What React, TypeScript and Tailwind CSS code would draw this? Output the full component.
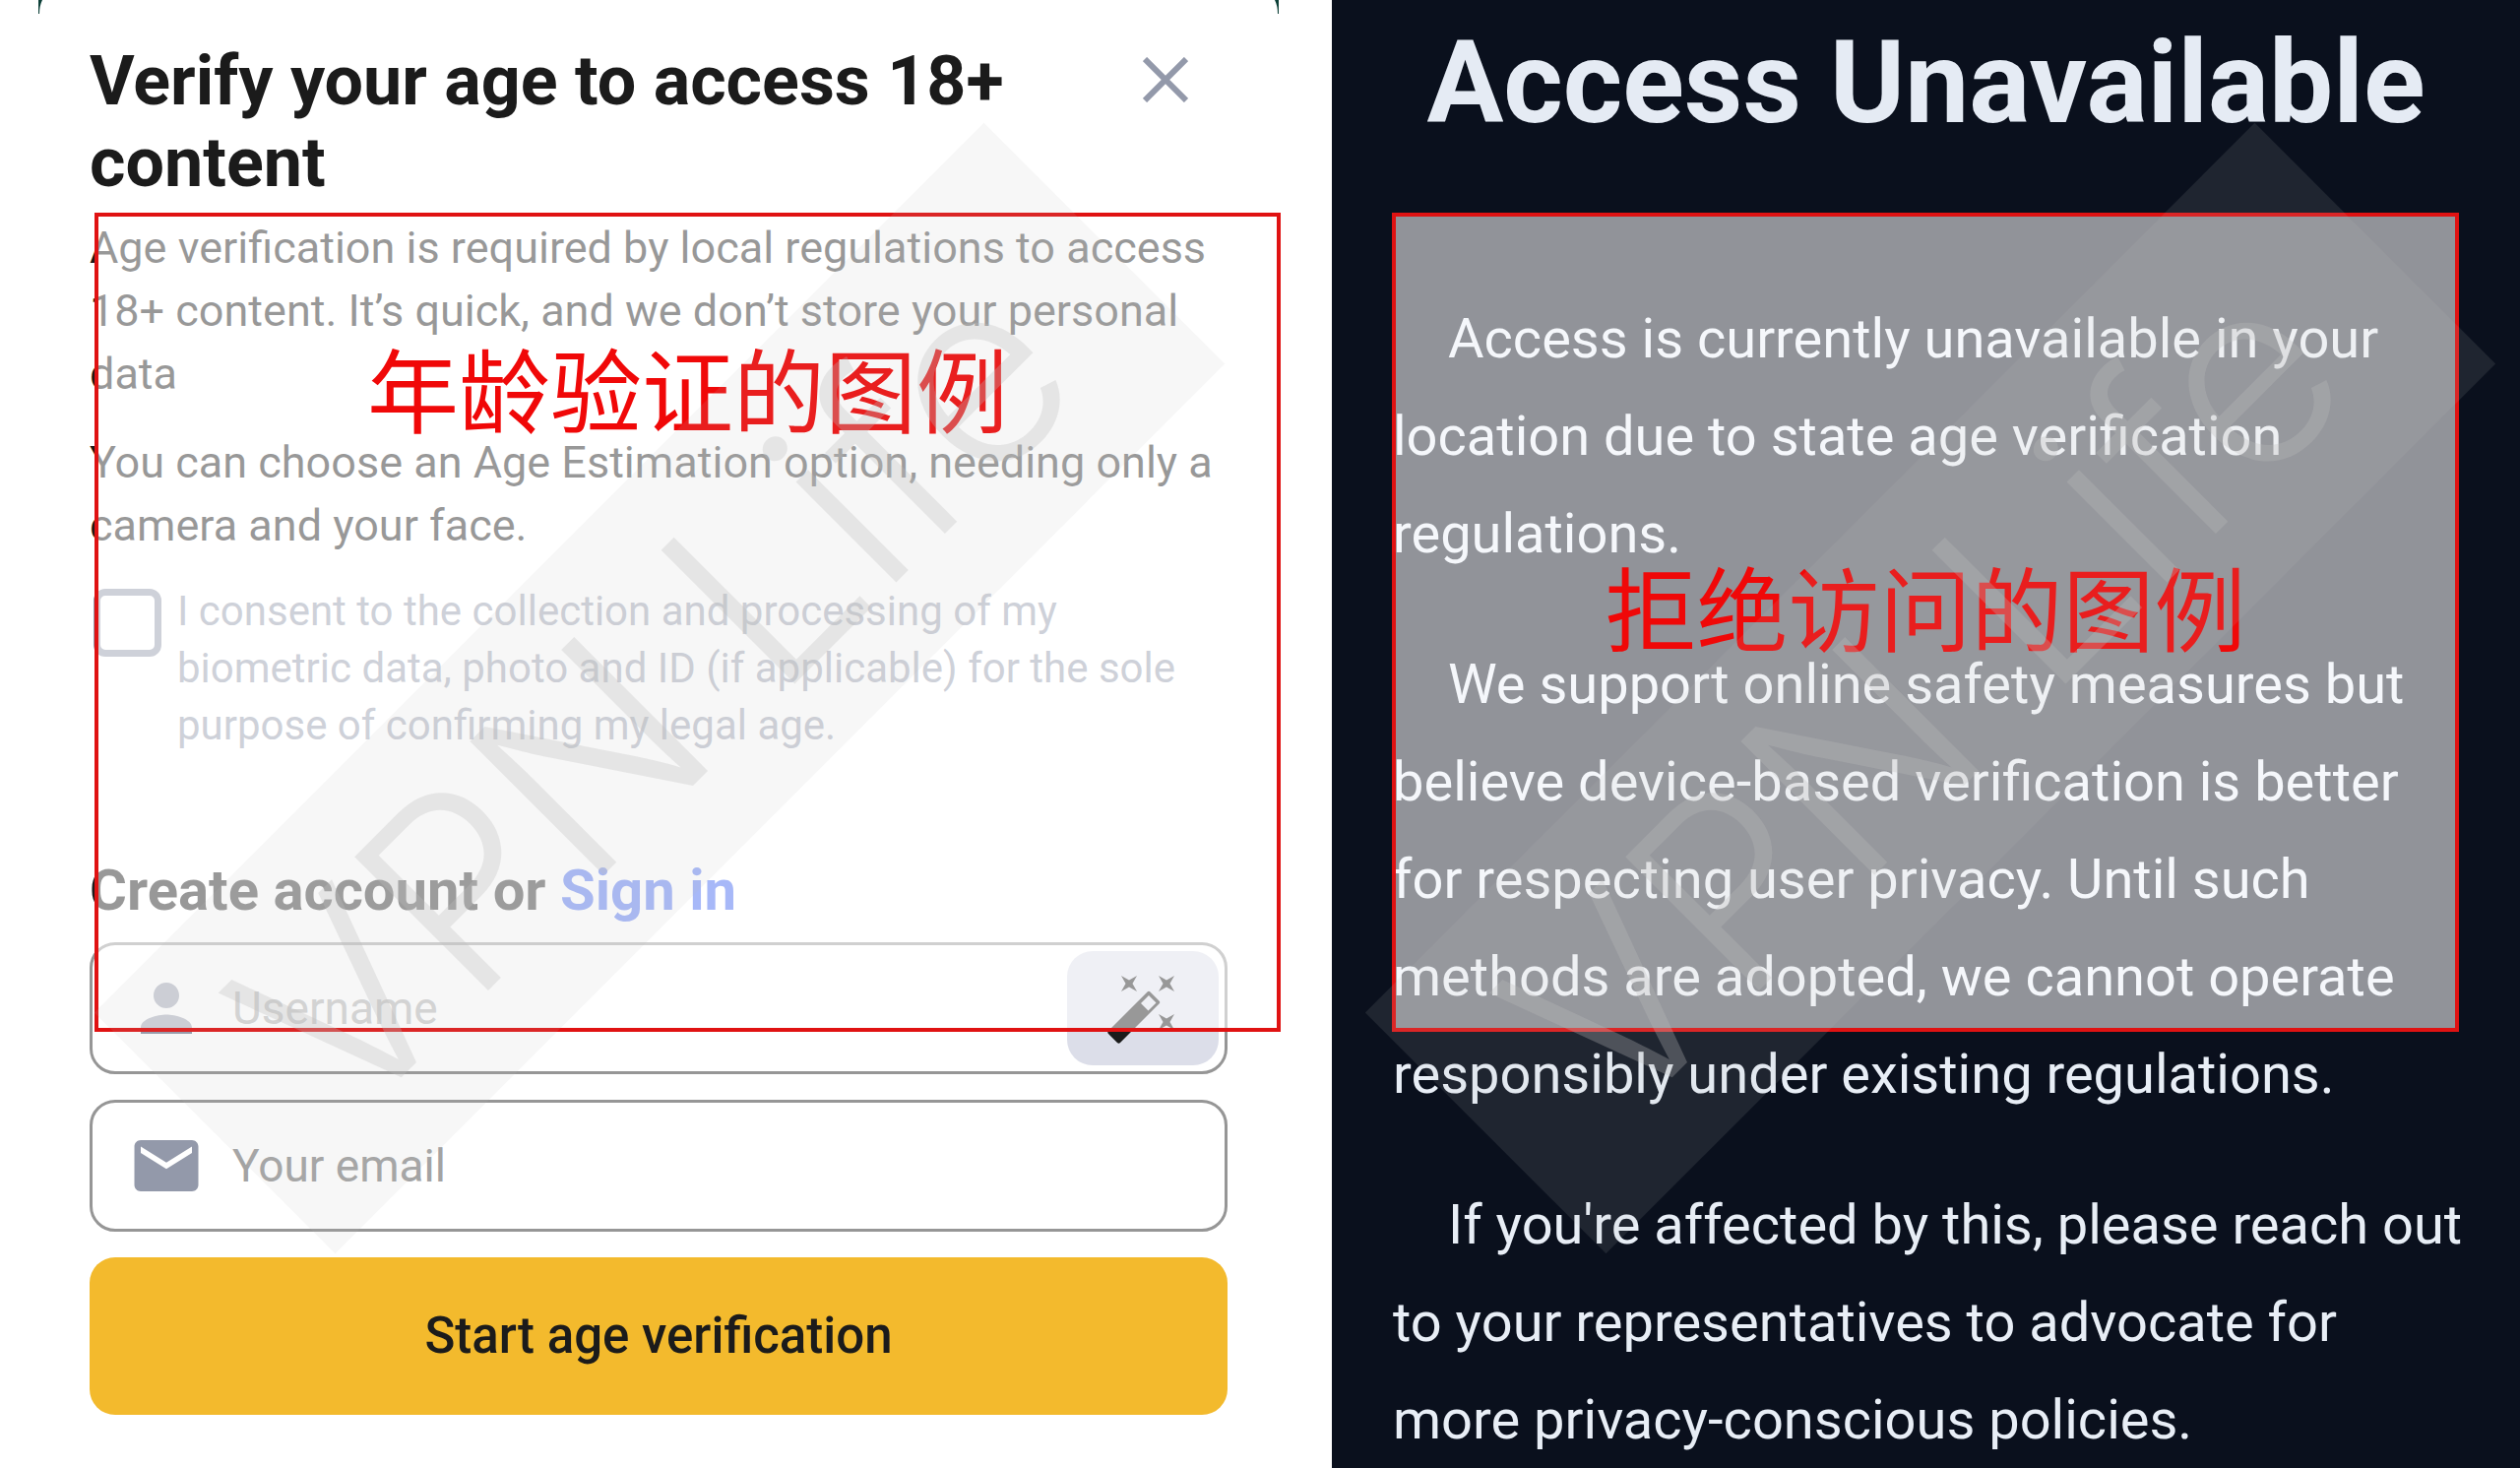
import React from "react";
import { MdPerson, MdMail } from "react-icons/md";

function Watermark({ inset }: { inset: string }) {
  return (
    <div className={`pointer-events-none absolute inset-0 z-20 flex items-start justify-center overflow-hidden ${inset}`} aria-hidden="true">
      <div className="mt-[526px] flex h-[346px] w-[1278px] shrink-0 -rotate-45 items-center justify-center bg-[#bbbbbb]/12 pr-5 pb-1">
        <span className="font-['Inter',sans-serif] text-[264px] leading-none font-light whitespace-nowrap text-[#bebebe]/30">
          VPN Life
        </span>
      </div>
    </div>
  );
}

function Callout({ text, frame, caption }: { text: string; frame: string; caption: string }) {
  return (
    <div className={`pointer-events-none absolute z-10 flex h-[832px] justify-center border-4 border-[#e01212] bg-white/55 ${frame}`}>
      <p className={`font-['Noto_Sans_CJK_SC',sans-serif] text-[93px] leading-[94px] whitespace-nowrap text-[#f00808] ${caption}`} lang="zh-CN">
        {text}
      </p>
    </div>
  );
}

function WandIcon() {
  return (
    <svg viewBox="0 0 76 76" className="size-[76px]" fill="#1b1b1b" aria-hidden="true">
      <path d="M16 5l8 4.500 8-4.500-4.500 8 4.500 8-8-4.500-8 4.500 4.500-8z" />
      <path d="M54 5l8 4.500 8-4.500-4.500 8 4.500 8-8-4.500-8 4.500 4.500-8z" />
      <path d="M54 44l8 4.500 8-4.500-4.500 8 4.500 8-8-4.500-8 4.500 4.500-8z" />
      <path fillRule="evenodd" d="M42.500 21.500q1.500-1.500 3 0l9 9q1.500 1.500 0 3L15 73q-1.500 1.500-3 0l-9-9q-1.500-1.500 0-3zM44 25l-8 8 7.500 7.500 8-8z" />
    </svg>
  );
}

function AgePanel() {
  return (
    <section className="relative bg-white pt-[41px] pr-[106px] pl-[91px] text-[#1b1b1b]">
      <svg viewBox="0 0 1260 14" className="absolute top-0 left-[39px] h-[14px] w-[1260px]" aria-hidden="true">
        <path d="M0 0H4Q1 6 1 14H0zM1260 0H1256Q1259 6 1259 14H1260z" fill="#0d4038" />
      </svg>
      <header className="flex items-start justify-between">
        <h1 className="text-[70px] leading-[83px] font-bold">
          Verify your age to access 18+
          <br />
          content
        </h1>
        <button type="button" aria-label="Close" className="mt-[17px] mr-10 text-[#9399aa]">
          <svg viewBox="0 0 46 46" className="size-[46px]" fill="none" stroke="currentColor" strokeWidth="6" aria-hidden="true">
            <path d="M2 2L44 44M44 2L2 44" />
          </svg>
        </button>
      </header>
      <p className="mt-[13px] text-[45px] leading-[64px]">
        Age verification is required by local regulations to access
        <br />
        18+ content. It’s quick, and we don’t store your personal
        <br />
        data
      </p>
      <p className="mt-[26px] text-[45px] leading-[64px]">
        You can choose an Age Estimation option, needing only a
        <br />
        camera and your face.
      </p>
      <label className="mt-[26px] flex items-start gap-4 text-[#9399aa]">
        <input type="checkbox" className="mt-[6px] ml-1 size-[69px] shrink-0 appearance-none rounded-[12px] border-[7px] border-[#9399aa]" />
        <span className="text-[42px] leading-[58px]">
          I consent to the collection and processing of my
          <br />
          biometric data, photo and ID (if applicable) for the sole
          <br />
          purpose of confirming my legal age.
        </span>
      </label>
      <h2 className="mt-[106px] text-[58px] leading-[64px] font-bold">
        Create account or{" "}
        <a href="#sign-in" className="text-[#3c62f0]">
          Sign in
        </a>
      </h2>
      <form className="mt-[21px] flex flex-col gap-[26px]">
        <div className="flex h-[134px] items-center rounded-[26px] border-[3px] border-[#969696] pr-1.5 pl-9">
          <MdPerson className="size-[78px] shrink-0 text-[#9399aa]" aria-hidden="true" />
          <input type="text" aria-label="Username" placeholder="Username" className="ml-7 min-w-0 flex-1 bg-transparent text-[46px] outline-none placeholder:text-[#a3a3a3]" />
          <button type="button" aria-label="Generate username" className="flex h-[116px] w-[154px] items-center justify-center rounded-[26px] bg-[#dcdee9]">
            <WandIcon />
          </button>
        </div>
        <div className="flex h-[134px] items-center rounded-[26px] border-[3px] border-[#969696] pr-1.5 pl-9">
          <MdMail className="size-[78px] shrink-0 text-[#9399aa]" aria-hidden="true" />
          <input type="email" aria-label="Your email" placeholder="Your email" className="ml-7 min-w-0 flex-1 bg-transparent text-[46px] outline-none placeholder:text-[#a3a3a3]" />
        </div>
        <button type="submit" className="h-[160px] rounded-[26px] bg-[#f3ba2d] text-[51px] font-medium">
          Start age verification
        </button>
      </form>
      <Callout text="年龄验证的图例" frame="top-[216px] left-24 right-[52px]" caption="mt-[126px]" />
      <Watermark inset="pr-3.5" />
    </section>
  );
}

function BlockedPanel() {
  return (
    <section className="relative flex flex-col gap-[54px] bg-[#0a101d] px-[62px] pt-[16px] text-[56px] leading-[99px] text-[#e8eef6]">
      <h1 className="text-center text-[116px] leading-[136px] font-bold whitespace-nowrap text-[#e5ebf4]">Access Unavailable</h1>
      <p className="mt-[89px] indent-14 whitespace-nowrap">
        Access is currently unavailable in your
        <br />
        location due to state age verification
        <br />
        regulations.
      </p>
      <p className="indent-14 whitespace-nowrap">
        We support online safety measures but
        <br />
        believe device-based verification is better
        <br />
        for respecting user privacy. Until such
        <br />
        methods are adopted, we cannot operate
        <br />
        responsibly under existing regulations.
      </p>
      <p className="indent-14 whitespace-nowrap">
        If you're affected by this, please reach out
        <br />
        to your representatives to advocate for
        <br />
        more privacy-conscious policies.
      </p>
      <Callout text="拒绝访问的图例" frame="top-[216px] left-[61px] right-[62px]" caption="mt-[348px]" />
      <Watermark inset="pl-2" />
    </section>
  );
}

export default function App() {
  return (
    <main className="grid min-h-screen grid-cols-[minmax(0,1353fr)_minmax(0,1207fr)] overflow-hidden font-['Roboto',sans-serif]">
      <AgePanel />
      <BlockedPanel />
    </main>
  );
}
